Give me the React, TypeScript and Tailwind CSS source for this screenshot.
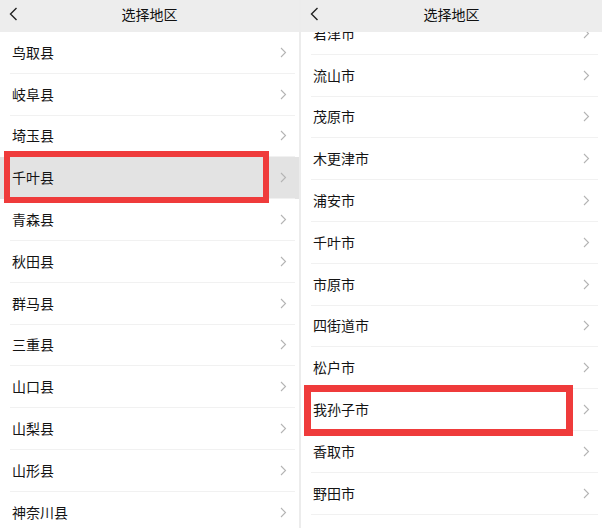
import React from 'react'

const leftItems = [
  '鸟取县',
  '岐阜县',
  '埼玉县',
  '千叶县',
  '青森县',
  '秋田县',
  '群马县',
  '三重县',
  '山口县',
  '山梨县',
  '山形县',
  '神奈川县',
]

const rightItems = [
  '君津市',
  '流山市',
  '茂原市',
  '木更津市',
  '浦安市',
  '千叶市',
  '市原市',
  '四街道市',
  '松户市',
  '我孙子市',
  '香取市',
  '野田市',
]

const font = { fontFamily: '"Noto Sans CJK SC", "Noto Sans", sans-serif' }

function Chevron() {
  return (
    <svg width="7" height="11" viewBox="0 0 7 11" className="shrink-0">
      <polyline points="1,1 5.5,5.5 1,10" fill="none" stroke="#b4b4b4" strokeWidth="1.1" />
    </svg>
  )
}

function BackIcon() {
  return (
    <svg width="9" height="14" viewBox="0 0 9 14">
      <polyline points="7.5,1 1.5,7 7.5,13" fill="none" stroke="#222" strokeWidth="1.4" />
    </svg>
  )
}

function Header() {
  return (
    <div className="relative flex h-[32px] shrink-0 items-center justify-center bg-[#ededed] pb-[4px]">
      <div className="absolute left-[9px] top-[7px]">
        <BackIcon />
      </div>
      <span className="text-[14px] text-[#111]">选择地区</span>
    </div>
  )
}

function Row({ label, active }: { label: string; active?: boolean }) {
  return (
    <div className={`flex h-[41.8px] shrink-0 flex-col ${active ? 'bg-[#e3e3e3]' : 'bg-white'}`}>
      <div className="flex flex-1 items-center justify-between pl-[12px] pr-[12px]">
        <span className="text-[14px] text-[#141414]">{label}</span>
        <Chevron />
      </div>
      <div className="ml-[10px] mr-[4px] h-px bg-[#f1f1f1]" />
    </div>
  )
}

function Panel({
  items,
  active,
  offset,
  width,
}: {
  items: string[]
  active?: string
  offset: string
  width: string
}) {
  return (
    <div className={`flex h-[528px] flex-col overflow-hidden bg-white ${width}`}>
      <Header />
      <div className="flex-1 overflow-hidden">
        <div className={`flex flex-col ${offset}`}>
          {items.map((it) => (
            <Row key={it} label={it} active={it === active} />
          ))}
        </div>
      </div>
    </div>
  )
}

export default function App() {
  return (
    <div className="relative flex h-[528px] w-[602px] overflow-hidden bg-white" style={font}>
      <Panel items={leftItems} active="千叶县" offset="mt-0" width="w-[299px]" />
      <div className="w-[2px] bg-[#ececec]" />
      <Panel items={rightItems} offset="-mt-[19px]" width="w-[301px]" />

      <div className="pointer-events-none absolute left-[4px] top-[151px] h-[52px] w-[265px] border-[6px] border-[#ef3b3b]" />
      <div className="pointer-events-none absolute left-[304px] top-[385px] h-[51px] w-[269px] border-[7px] border-[#ef3b3b]" />
    </div>
  )
}
